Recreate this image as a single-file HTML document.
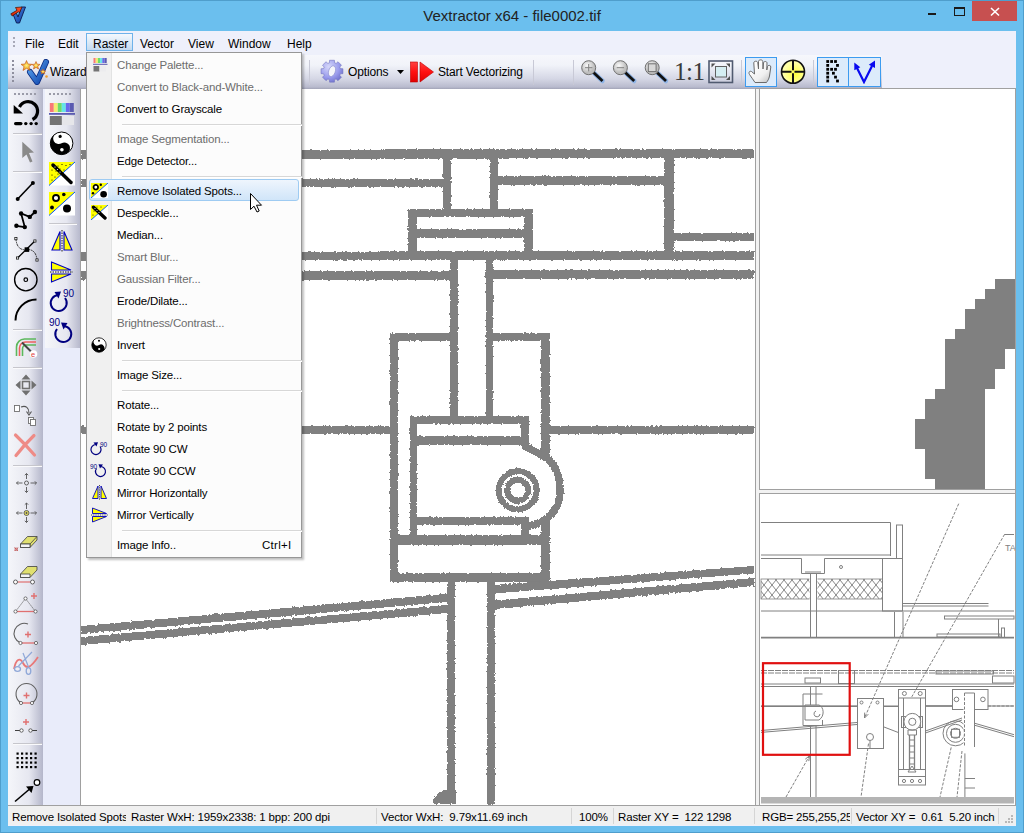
<!DOCTYPE html>
<html><head><meta charset="utf-8">
<style>
*{box-sizing:border-box}
html,body{margin:0;padding:0}
body{width:1024px;height:833px;overflow:hidden;position:relative;background:#6BBFEE;font-family:"Liberation Sans",sans-serif;font-size:12px;color:#000}
.a{position:absolute}
#title{left:0;top:0;width:1024px;height:31px;text-align:center;font-size:15px;color:#222;line-height:31px}
#client{left:8px;top:31px;width:1008px;height:795px;background:#EEF0FB}
#menubar{left:8px;top:31px;width:1008px;height:24px;background:#EEF0FB}
.ti{font-size:12px;color:#000;line-height:14px;letter-spacing:-0.15px}
.mi{position:absolute;top:37px;font-size:12px;color:#000}
#toolbar{left:8px;top:55px;width:874px;height:34px;border-radius:3px 3px 0 0;background:linear-gradient(#F6F7FC 0%,#F1F3F9 30%,#D5D7E5 70%,#B9BBCE 94%,#A2A4B7 100%)}
.sep1{left:13px;width:29px;height:2px;border-top:1px solid #C6C6CC;border-bottom:1px solid #FAFAFC}
.sep2{left:49px;width:28px;height:2px;border-top:1px solid #C6C6CC;border-bottom:1px solid #FAFAFC}
#col1{left:8px;top:89px;width:35px;height:716px;background:linear-gradient(90deg,#F5F6FA,#E6E7F0 60%,#B4B6CA)}
#col2{left:45px;top:89px;width:36px;height:259px;background:linear-gradient(90deg,#F5F6FA,#E6E7F0 60%,#B4B6CA)}
#canvas{left:80px;top:89px;width:675px;height:716px;background:#fff;border-left:1px solid #A0A0A0}
#rtop{left:755px;top:89px;width:261px;height:404px;background:#F2F2F2;border-left:1px solid #A0A0A0;border-right:1px solid #A0A0A0}
#rtopi{left:759px;top:89px;width:257px;height:401px;background:#fff;border-left:1px solid #A0A0A0;border-right:1px solid #A0A0A0;border-bottom:1px solid #A0A0A0}
#rbot{left:755px;top:493px;width:261px;height:313px;background:#F2F2F2;border-left:1px solid #A0A0A0;border-right:1px solid #A0A0A0}
#rboti{left:759px;top:493px;width:257px;height:313px;background:#fff;border:1px solid #A0A0A0;border-right-color:#A0A0A0}
#status{left:8px;top:805px;width:1008px;height:20px;background:#F0F0F0;border-top:1px solid #A0A0A0}
.st{top:808px;height:18px;line-height:18px;font-size:11.5px;letter-spacing:-0.15px;white-space:nowrap;color:#000}
.ssep{top:808px;width:1px;height:16px;background:#D5D5D5}
#menu{left:86px;top:52px;width:216px;height:506px;background:#FCFCFC;border:1px solid #979797;box-shadow:2px 2px 2px rgba(0,0,0,0.25)}
.mt{left:30px;height:22px;line-height:22px;font-size:11.5px;letter-spacing:-0.15px;white-space:nowrap}
</style></head><body>
<div id="title" class="a">Vextractor x64 - file0002.tif</div>
<div id="client" class="a"></div>

<div id="menubar" class="a">
</div>
<div class="a" style="left:13px;top:37px;width:2px;height:10px;background:repeating-linear-gradient(#A8A9B8 0 2px,transparent 2px 4px)"></div>
<div class="a" style="left:86px;top:33px;width:47px;height:18px;border:1px solid #6FB2EA;background:linear-gradient(#F4F8FD,#DDEAF7 50%,#C4DAF0)"></div>
<span class="mi" style="left:25px">File</span>
<span class="mi" style="left:58px">Edit</span>
<span class="mi" style="left:93px">Raster</span>
<span class="mi" style="left:140px">Vector</span>
<span class="mi" style="left:188px">View</span>
<span class="mi" style="left:228px">Window</span>
<span class="mi" style="left:287px">Help</span>


<div id="toolbar" class="a"></div>
<div class="a" style="left:12px;top:60px;width:2px;height:23px;background:repeating-linear-gradient(#8E8F9E 0 2px,transparent 2px 4px)"></div>
<svg class="a" style="left:20px;top:59px" width="30" height="26" viewBox="0 0 30 26">
 <defs><linearGradient id="vg" x1="0" y1="0" x2="1" y2="1"><stop offset="0" stop-color="#5AA6F0"/><stop offset="1" stop-color="#0B3FA8"/></linearGradient>
 <radialGradient id="sg"><stop offset="0" stop-color="#FFF27A"/><stop offset="1" stop-color="#E98A10"/></radialGradient></defs>
 <path d="M10 13 L17 23 L26 3" fill="none" stroke="#0A2A80" stroke-width="6" stroke-linecap="round" stroke-linejoin="round"/><path d="M10 13 L17 23 L26 3" fill="none" stroke="url(#vg)" stroke-width="4.4" stroke-linecap="round" stroke-linejoin="round"/>
 <path d="M6.5 1.5 L8 5 L12 5.3 L9 7.6 L10 11.5 L6.5 9.3 L3 11.5 L4 7.6 L1 5.3 L5 5 Z" fill="url(#sg)" stroke="#C2571A" stroke-width="0.6"/>
 <path d="M16 2.5 L17.2 5.2 L20 5.4 L17.8 7.2 L18.5 10 L16 8.4 L13.5 10 L14.2 7.2 L12 5.4 L14.8 5.2 Z" fill="url(#sg)" stroke="#C2571A" stroke-width="0.6"/>
 <path d="M23 10 L23.8 11.8 L25.8 12 L24.3 13.2 L24.8 15 L23 14 L21.2 15 L21.7 13.2 L20.2 12 L22.2 11.8 Z" fill="url(#sg)" stroke="#C2571A" stroke-width="0.5"/>
 <circle cx="26.5" cy="17.5" r="1.3" fill="#F0A030"/>
</svg>
<span class="a ti" style="left:50px;top:65px">Wizard</span>
<div class="a" style="left:309px;top:60px;width:1px;height:25px;background:#C8C9D6"></div>
<svg class="a" style="left:320px;top:59px" width="25" height="25" viewBox="0 0 25 25">
 <defs><radialGradient id="gg" cx="0.35" cy="0.3" r="0.8"><stop offset="0" stop-color="#D6D8FA"/><stop offset="0.6" stop-color="#9A9CEC"/><stop offset="1" stop-color="#6A6CC8"/></radialGradient></defs>
 <g transform="translate(12 12.2)">
 <path d="M8.41 -2.60 L10.93 -2.44 L10.93 2.44 L8.41 2.60 L7.78 4.11 L9.46 6.00 L6.00 9.46 L4.11 7.78 L2.60 8.41 L2.44 10.93 L-2.44 10.93 L-2.60 8.41 L-4.11 7.78 L-6.00 9.46 L-9.46 6.00 L-7.78 4.11 L-8.41 2.60 L-10.93 2.44 L-10.93 -2.44 L-8.41 -2.60 L-7.78 -4.11 L-9.46 -6.00 L-6.00 -9.46 L-4.11 -7.78 L-2.60 -8.41 L-2.44 -10.93 L2.44 -10.93 L2.60 -8.41 L4.11 -7.78 L6.00 -9.46 L9.46 -6.00 L7.78 -4.11 Z" fill="url(#gg)" stroke="#7476C0" stroke-width="0.6" stroke-linejoin="round"/>
 <ellipse cx="0" cy="0" rx="3.3" ry="5.6" transform="rotate(20)" fill="#F4F5FA" stroke="#8A8CD0" stroke-width="0.6"/>
 </g>
</svg>
<span class="a ti" style="left:348px;top:65px">Options</span>
<svg class="a" style="left:397px;top:70px" width="7" height="4"><path d="M0 0 H7 L3.5 4 Z" fill="#000"/></svg>
<svg class="a" style="left:410px;top:61px" width="25" height="22" viewBox="0 0 25 22">
 <defs><linearGradient id="rg" x1="0" y1="0" x2="0" y2="1"><stop offset="0" stop-color="#FF4040"/><stop offset="0.5" stop-color="#FF1010"/><stop offset="1" stop-color="#E00000"/></linearGradient></defs>
 <rect x="0.5" y="1" width="7" height="20" fill="url(#rg)" stroke="#C00000" stroke-width="0.6"/>
 <path d="M10 1 L23.5 11 L10 21 Z" fill="url(#rg)" stroke="#C00000" stroke-width="0.6"/>
</svg>
<span class="a ti" style="left:438px;top:65px">Start Vectorizing</span>
<div class="a" style="left:533px;top:60px;width:1px;height:25px;background:#C8C9D6"></div>
<div class="a" style="left:573px;top:60px;width:1px;height:25px;background:#C8C9D6"></div>
<svg class="a" style="left:578px;top:57px" width="160" height="30" viewBox="0 0 160 30">
 <defs><radialGradient id="lg" cx="0.4" cy="0.35"><stop offset="0" stop-color="#FAFAFA"/><stop offset="1" stop-color="#BDBDBD"/></radialGradient></defs>
 <g>
  <line x1="15" y1="15" x2="24.5" y2="24" stroke="#8FB4E6" stroke-width="4.5" stroke-linecap="round"/>
  <line x1="15" y1="15" x2="24.5" y2="24" stroke="#111" stroke-width="2.8" stroke-linecap="butt"/>
  <circle cx="10.7" cy="10.7" r="7" fill="url(#lg)" stroke="#707070" stroke-width="1"/>
  <path d="M7 10.7 H14.4 M10.7 7 V14.4" stroke="#808080" stroke-width="1"/>
 </g>
 <g transform="translate(31.7 0)">
  <line x1="15" y1="15" x2="24.5" y2="24" stroke="#8FB4E6" stroke-width="4.5" stroke-linecap="round"/>
  <line x1="15" y1="15" x2="24.5" y2="24" stroke="#111" stroke-width="2.8"/>
  <circle cx="10.7" cy="10.7" r="7" fill="url(#lg)" stroke="#707070" stroke-width="1"/>
  <path d="M7 10.7 H14.4" stroke="#808080" stroke-width="1"/>
 </g>
 <g transform="translate(63.5 0)">
  <line x1="15" y1="15" x2="24.5" y2="24" stroke="#8FB4E6" stroke-width="4.5" stroke-linecap="round"/>
  <line x1="15" y1="15" x2="24.5" y2="24" stroke="#111" stroke-width="2.8"/>
  <circle cx="10.7" cy="10.7" r="7" fill="url(#lg)" stroke="#707070" stroke-width="1"/>
  <rect x="6.8" y="6.8" width="7.8" height="7.8" fill="#D8D8D8" stroke="#707070" stroke-width="1"/>
 </g>
 <g transform="translate(130.5 3.5)">
  <rect x="0.5" y="0.5" width="23.5" height="21.5" fill="none" stroke="#505A70" stroke-width="1.6"/>
  <rect x="7" y="6" width="11" height="10.5" fill="#D5EEF2" stroke="#606060" stroke-width="1"/>
  <path d="M3 3 L7 3 L3 7 Z M21.5 3 L17.5 3 L21.5 7 Z M3 19.5 L7 19.5 L3 15.5 Z M21.5 19.5 L17.5 19.5 L21.5 15.5 Z" fill="#505050"/>
 </g>
</svg>
<span class="a" style="left:674px;top:57px;font-family:'Liberation Serif',serif;font-size:25px;color:#3A3A3A;line-height:30px;letter-spacing:-0.5px">1:1</span>
<div class="a" style="left:741px;top:60px;width:1px;height:25px;background:#C8C9D6"></div>
<div class="a" style="left:745px;top:57px;width:32px;height:30px;border:1px solid #3C9BF0;background:#DCEBFB"></div>
<svg class="a" style="left:748px;top:59px" width="25" height="25" viewBox="0 0 25 25">
 <defs><linearGradient id="hg" x1="0.2" y1="0.2" x2="0.9" y2="1"><stop offset="0" stop-color="#FFFFFF"/><stop offset="0.6" stop-color="#F0F0F0"/><stop offset="1" stop-color="#C4C4C4"/></linearGradient></defs>
 <path d="M7 23.5 C5.5 21 3.5 18.5 1.5 15.5 C0.5 14 1 11.5 3.5 12.5 L6.5 15 L5.8 4 C5.7 1.8 9.5 1.5 9.8 3.8 L10.5 10 L10.5 2.5 C10.5 0.3 14.8 0.3 14.8 2.5 L15 10 L15.5 4 C15.7 2 19 2 19 4 L18.8 11 L19.5 7.5 C19.8 5.8 23 6 22.8 8 L21.5 17 C21 20 19.5 22 18.5 23.5 Z" fill="url(#hg)" stroke="#6A6A6A" stroke-width="1"/>
</svg>
<svg class="a" style="left:780px;top:59px" width="27" height="26" viewBox="0 0 27 26">
 <defs><radialGradient id="yg" cx="0.6" cy="0.6"><stop offset="0" stop-color="#FFFF40"/><stop offset="1" stop-color="#FFFFA8"/></radialGradient></defs>
 <circle cx="13" cy="12.7" r="11.5" fill="url(#yg)" stroke="#111" stroke-width="1.6"/>
 <path d="M1.5 12.7 H11.5 M14.5 12.7 H24.5 M13 1.2 V11.2 M13 14.2 V24.2" stroke="#111" stroke-width="2"/>
</svg>
<div class="a" style="left:813px;top:60px;width:1px;height:25px;background:#C8C9D6"></div>
<div class="a" style="left:817px;top:57px;width:32px;height:30px;border:1px solid #3C9BF0;background:#DCEBFB"></div>
<div class="a" style="left:848px;top:57px;width:33px;height:30px;border:1px solid #3C9BF0;background:#DCEBFB"></div>
<svg class="a" style="left:825px;top:60px" width="16" height="24" viewBox="0 0 16 24"><g fill="#000"><rect x="1.30" y="0.10" width="2.8" height="2.8"/><rect x="5.20" y="0.10" width="2.8" height="2.8"/><rect x="9.10" y="0.10" width="2.8" height="2.8"/><rect x="1.30" y="4.00" width="2.8" height="2.8"/><rect x="11.10" y="4.00" width="2.8" height="2.8"/><rect x="1.30" y="7.90" width="2.8" height="2.8"/><rect x="5.20" y="7.90" width="2.8" height="2.8"/><rect x="9.10" y="7.90" width="2.8" height="2.8"/><rect x="1.30" y="11.80" width="2.8" height="2.8"/><rect x="7.00" y="11.80" width="2.8" height="2.8"/><rect x="1.30" y="15.70" width="2.8" height="2.8"/><rect x="9.10" y="15.70" width="2.8" height="2.8"/><rect x="1.30" y="19.60" width="2.8" height="2.8"/><rect x="11.10" y="19.60" width="2.8" height="2.8"/></g></svg>
<svg class="a" style="left:852px;top:60px" width="25" height="24" viewBox="0 0 25 24">
 <path d="M5 8 L12 22 L20 6" fill="none" stroke="#0A0AF0" stroke-width="2.2"/>
 <path d="M2.3 2.5 L8.3 7.2 L2.3 10.2 Z M23 0.5 L23 8 L16.8 4.8 Z" fill="#0A0AF0"/>
</svg>


<div class="a" style="left:43px;top:89px;width:38px;height:716px;background:#E9ECFA"></div>
<div id="col1" class="a"></div>
<div id="col2" class="a"></div>
<div class="a" style="left:14px;top:93px;width:24px;height:2px;background:repeating-linear-gradient(90deg,#9A9BA8 0 2px,transparent 2px 4px)"></div>
<div class="a" style="left:49px;top:93px;width:24px;height:2px;background:repeating-linear-gradient(90deg,#9A9BA8 0 2px,transparent 2px 4px)"></div>
<div class="a sep1" style="top:133px"></div>
<div class="a sep1" style="top:171px"></div>
<div class="a sep1" style="top:329px"></div>
<div class="a sep1" style="top:367px"></div>
<div class="a sep1" style="top:465px"></div>
<div class="a sep1" style="top:743px"></div>
<div class="a sep2" style="top:223px"></div>
<svg class="a" style="left:8px;top:89px" width="36" height="716" viewBox="0 0 36 716">
 <!-- undo -->
 <path d="M11.5 18 A 9.5 9.5 0 1 1 24.5 30.5" fill="none" stroke="#000" stroke-width="3.2"/>
 <path d="M5.7 16 L15 24.5 L5.7 24.5 Z" fill="#000"/>
 <rect x="6" y="33" width="8.5" height="3.2" rx="1.6" fill="#000"/>
 <circle cx="17.8" cy="34.6" r="1.7" fill="#000"/><circle cx="23.1" cy="34.6" r="1.7" fill="#000"/><circle cx="28.2" cy="34.6" r="1.7" fill="#000"/>
 <!-- arrow cursor -->
 <path d="M14.3 52.8 L26 63.5 L21 64 L24.5 72.5 L22 73.5 L18.5 65.5 L14.3 69 Z" fill="#8A8A8A"/>
 <!-- line -->
 <line x1="9.7" y1="110" x2="24.9" y2="94" stroke="#000" stroke-width="1.6"/>
 <circle cx="9.7" cy="110" r="2" fill="#000"/><circle cx="24.9" cy="94" r="2" fill="#000"/>
 <!-- polyline -->
 <path d="M8.4 136.8 L16.8 138.1 L13.1 124.5 L21.8 127.9 L26.9 123" fill="none" stroke="#000" stroke-width="1.8"/>
 <circle cx="8.4" cy="136.8" r="2.2"/><circle cx="16.8" cy="138.1" r="2.2"/><circle cx="13.1" cy="124.5" r="2.2"/><circle cx="21.8" cy="127.9" r="2.2"/><circle cx="26.9" cy="123" r="2.2"/>
 <!-- bezier -->
 <path d="M7.9 149.8 Q 9 162 18.8 160.6 Q 28 160 29 171" fill="none" stroke="#202020" stroke-width="0.9" stroke-dasharray="2 0.7"/>
 <line x1="9.6" y1="169" x2="26.9" y2="152" stroke="#000" stroke-width="1.3"/>
 <rect x="16.6" y="158.3" width="4.6" height="4.6" fill="#000"/>
 <rect x="6.8" y="148.6" width="2.2" height="2.2" fill="#fff" stroke="#000" stroke-width="0.7"/>
 <rect x="25.8" y="150.9" width="2.2" height="2.2" fill="#fff" stroke="#000" stroke-width="0.7"/>
 <rect x="8.5" y="167.9" width="2.2" height="2.2" fill="#fff" stroke="#000" stroke-width="0.7"/>
 <rect x="27.9" y="169.9" width="2.2" height="2.2" fill="#fff" stroke="#000" stroke-width="0.7"/>
 <!-- circle -->
 <circle cx="17.8" cy="190.7" r="11.2" fill="none" stroke="#000" stroke-width="1.4"/>
 <circle cx="17.8" cy="190.7" r="1.8" fill="none" stroke="#000" stroke-width="1.2"/>
 <!-- arc -->
 <path d="M7.5 231.5 A 21 21 0 0 1 28.5 210.5" fill="none" stroke="#000" stroke-width="2"/>
 <!-- colour lines -->
 <path d="M8.5 267 V258 A 8 8 0 0 1 16.5 250 H28" fill="none" stroke="#5CB85C" stroke-width="1.6"/>
 <path d="M11.5 267 V259 A 6 6 0 0 1 17.5 253 H28" fill="none" stroke="#F06060" stroke-width="1.6"/>
 <path d="M14.5 267 V260 A 4 4 0 0 1 18.5 256 H28" fill="none" stroke="#5CB85C" stroke-width="1.6"/>
 <line x1="14" y1="253.5" x2="23.5" y2="263" stroke="#444" stroke-width="2"/>
 <circle cx="25.5" cy="265" r="3.8" fill="#fff"/>
 <text x="23" y="268" font-size="7.5" fill="#E04040" font-family="Liberation Sans">e</text>
 <!-- move -->
 <path d="M18 285.5 L22.5 290.5 L13.5 290.5 Z M18 306.5 L22.5 301.5 L13.5 301.5 Z M7.5 296 L12.5 291.5 L12.5 300.5 Z M28.5 296 L23.5 291.5 L23.5 300.5 Z" fill="#707070"/>
 <rect x="14.5" y="292.5" width="7" height="7" fill="none" stroke="#707070" stroke-width="1.6"/>
 <!-- copy transform -->
 <rect x="6.5" y="316.5" width="5" height="6" fill="#fff" stroke="#707070" stroke-width="0.9"/>
 <path d="M13 318 C18 316 21 319 21 324" fill="none" stroke="#555" stroke-width="1.1"/>
 <path d="M18.5 322.5 L21 326 L23.5 322.5" fill="none" stroke="#555" stroke-width="1.1"/>
 <rect x="20.5" y="328.5" width="5" height="6" fill="#fff" stroke="#707070" stroke-width="0.9"/>
 <rect x="22.5" y="330.5" width="5" height="6" fill="#fff" stroke="#707070" stroke-width="0.9"/>
 <!-- red X -->
 <path d="M7.5 346 Q17 355 26.5 366 M26 346.5 Q16 356 8 366.5" fill="none" stroke="#EE8B86" stroke-width="3.2" stroke-linecap="round"/>
 <!-- move node -->
 <g stroke="#555" stroke-width="0.9" fill="none">
 <circle cx="18.5" cy="394" r="2"/>
 <path d="M18.5 384.5 V390 M16.8 386.2 L18.5 384.5 L20.2 386.2 M18.5 398 V403.5 M16.8 401.8 L18.5 403.5 L20.2 401.8 M8.5 394 H14.5 M10.2 392.3 L8.5 394 L10.2 395.7 M22.5 394 H28.5 M26.8 392.3 L28.5 394 L26.8 395.7"/>
 </g>
 <g stroke="#555" stroke-width="0.9" fill="none">
 <circle cx="18.5" cy="424" r="2.5" fill="#F0E860"/>
 <path d="M17.3 424 H19.7 M18.5 422.8 V425.2" />
 <path d="M18.5 414 V420 M16.8 415.7 L18.5 414 L20.2 415.7 M18.5 428 V433.5 M16.8 431.8 L18.5 433.5 L20.2 431.8 M8.5 424 H14.5 M10.2 422.3 L8.5 424 L10.2 425.7 M22.5 424 H28.5 M26.8 422.3 L28.5 424 L26.8 425.7"/>
 </g>
 <!-- eraser 1 -->
 <path d="M12.5 455 L19.5 447.5 L29 447.5 L29 451 L22 458.5 L12.5 458.5 Z" fill="#E0E070" stroke="#404040" stroke-width="0.8"/>
 <path d="M12.5 455 L22 455 L29 447.5 M22 455 V458.5" fill="none" stroke="#404040" stroke-width="0.8"/>
 <path d="M12.5 455 H22 V458.5 H12.5 Z" fill="#F4F4F4" stroke="#404040" stroke-width="0.8"/>
 <path d="M6.5 458.5 L10 462 M10 458.5 L6.5 462" stroke="#E07070" stroke-width="1"/>
 <rect x="7" y="459" width="2.5" height="2.5" fill="none" stroke="#A04040" stroke-width="0.5"/>
 <!-- eraser 2 -->
 <path d="M12.5 485 L19.5 477.5 L29 477.5 L29 481 L22 488.5 L12.5 488.5 Z" fill="#E0E070" stroke="#404040" stroke-width="0.8"/>
 <path d="M12.5 485 H22 V488.5 H12.5 Z" fill="#F4F4F4" stroke="#404040" stroke-width="0.8"/>
 <line x1="9.5" y1="493" x2="22.5" y2="493" stroke="#E07070" stroke-width="1.2"/>
 <circle cx="7.5" cy="493" r="2" fill="#fff" stroke="#404040" stroke-width="0.8"/>
 <circle cx="24.5" cy="493" r="2" fill="#fff" stroke="#404040" stroke-width="0.8"/>
 <!-- triangle + -->
 <path d="M7.5 522.5 L17.5 509.5 L27.5 522.5" fill="none" stroke="#606060" stroke-width="0.9" stroke-dasharray="1.5 1"/>
 <line x1="9" y1="522.5" x2="26" y2="522.5" stroke="#E07070" stroke-width="1.3"/>
 <circle cx="7.5" cy="522.5" r="1.6" fill="#fff" stroke="#404040" stroke-width="0.7"/>
 <circle cx="27.5" cy="522.5" r="1.6" fill="#fff" stroke="#404040" stroke-width="0.7"/>
 <circle cx="17.5" cy="509.5" r="1.6" fill="#fff" stroke="#404040" stroke-width="0.7"/>
 <path d="M23 507 H29 M26 504 V510" stroke="#E07070" stroke-width="1.4"/>
 <!-- arc + -->
 <path d="M12.5 554 A 8.5 8.5 0 0 1 20 535" fill="none" stroke="#606060" stroke-width="1.1"/>
 <line x1="12.5" y1="554" x2="28" y2="554" stroke="#E07070" stroke-width="1.3"/>
 <circle cx="12.5" cy="554" r="1.6" fill="#fff" stroke="#404040" stroke-width="0.7"/>
 <circle cx="28" cy="554" r="1.6" fill="#fff" stroke="#404040" stroke-width="0.7"/>
 <path d="M17 545.5 H23 M20 542.5 V548.5" stroke="#E07070" stroke-width="1.4"/>
 <!-- scissors -->
 <path d="M6 580 C8 570 12 568 15 574 C18 580 22 580 30 568" fill="none" stroke="#E87878" stroke-width="1.8"/>
 <path d="M10.5 577 L24 563 M15 564 L20.5 578" stroke="#90A8D8" stroke-width="1.2"/>
 <ellipse cx="9.5" cy="580" rx="3" ry="2.3" fill="none" stroke="#90A8D8" stroke-width="1.3"/>
 <ellipse cx="20.5" cy="582" rx="2.3" ry="3.3" fill="none" stroke="#90A8D8" stroke-width="1.3"/>
 <!-- circle + -->
 <path d="M13 614 A 10.5 10.5 0 1 1 24 614" fill="none" stroke="#606060" stroke-width="1.1"/>
 <line x1="13" y1="614" x2="24" y2="614" stroke="#E07070" stroke-width="1.3"/>
 <circle cx="13" cy="614" r="1.6" fill="#fff" stroke="#404040" stroke-width="0.7"/>
 <circle cx="24" cy="614" r="1.6" fill="#fff" stroke="#404040" stroke-width="0.7"/>
 <path d="M15.5 606.5 H21.5 M18.5 603.5 V609.5" stroke="#E07070" stroke-width="1.4"/>
 <!-- dots + -->
 <line x1="7" y1="641.5" x2="14" y2="641.5" stroke="#404040" stroke-width="1"/>
 <line x1="22" y1="641.5" x2="29" y2="641.5" stroke="#404040" stroke-width="1"/>
 <circle cx="13.5" cy="641.5" r="1.7" fill="#fff" stroke="#404040" stroke-width="0.8"/>
 <circle cx="22.5" cy="641.5" r="1.7" fill="#fff" stroke="#404040" stroke-width="0.8"/>
 <path d="M15 633 H21 M18 630 V636" stroke="#E07070" stroke-width="1.4"/>
 <!-- grid -->
 <g fill="#000">
 <rect x="8.5" y="663.5" width="2.2" height="2.2"/><rect x="13" y="663.5" width="2.2" height="2.2"/><rect x="17.5" y="663.5" width="2.2" height="2.2"/><rect x="22" y="663.5" width="2.2" height="2.2"/><rect x="26.5" y="663.5" width="2.2" height="2.2"/>
 <rect x="8.5" y="668" width="2.2" height="2.2"/><rect x="13" y="668" width="2.2" height="2.2"/><rect x="17.5" y="668" width="2.2" height="2.2"/><rect x="22" y="668" width="2.2" height="2.2"/><rect x="26.5" y="668" width="2.2" height="2.2"/>
 <rect x="8.5" y="672.5" width="2.2" height="2.2"/><rect x="13" y="672.5" width="2.2" height="2.2"/><rect x="17.5" y="672.5" width="2.2" height="2.2"/><rect x="22" y="672.5" width="2.2" height="2.2"/><rect x="26.5" y="672.5" width="2.2" height="2.2"/>
 <rect x="8.5" y="677" width="2.2" height="2.2"/><rect x="13" y="677" width="2.2" height="2.2"/><rect x="17.5" y="677" width="2.2" height="2.2"/><rect x="22" y="677" width="2.2" height="2.2"/><rect x="26.5" y="677" width="2.2" height="2.2"/>
 </g>
 <!-- pointer arrow -->
 <line x1="7" y1="712.5" x2="24" y2="698" stroke="#000" stroke-width="1.6"/>
 <path d="M25.5 697 L18 697.5 L23.5 704 Z" fill="#000"/>
 <circle cx="29" cy="693.5" r="2.8" fill="#fff" stroke="#000" stroke-width="1.2"/>
</svg>
<svg class="a" style="left:45px;top:89px" width="36" height="260" viewBox="0 0 36 260">
 <!-- palette -->
 <rect x="4.8" y="14" width="4" height="9" fill="#F87878"/><rect x="8.8" y="14" width="4" height="9" fill="#F4EC70"/><rect x="12.8" y="14" width="4" height="9" fill="#6CDC6C"/><rect x="16.8" y="14" width="4" height="9" fill="#64E4E8"/><rect x="20.8" y="14" width="4" height="9" fill="#6868EC"/><rect x="24.8" y="14" width="4" height="9" fill="#5A5AB0"/>
 <rect x="4" y="24" width="26" height="1.8" fill="#5A5AB0"/>
 <rect x="4.8" y="27" width="12" height="9" fill="#747474"/><rect x="17" y="27" width="12" height="9" fill="#E6E6EA"/>
 <!-- yin yang -->
 <g transform="translate(16.6 54.3)">
 <circle r="11.3" fill="#fff" stroke="#000" stroke-width="1"/>
 <path d="M0 -11.3 A 11.3 11.3 0 0 0 0 11.3 A 5.65 5.65 0 0 0 0 0 A 5.65 5.65 0 0 1 0 -11.3 Z" fill="#000" transform="rotate(-30)"/>
 <circle cx="-0.3" cy="-7" r="1.6" fill="#000" transform="rotate(-10)"/>
 <circle cx="0.3" cy="6.5" r="1.8" fill="#fff"/>
 </g>
 <!-- despeckle -->
 <g transform="translate(4 73)">
 <rect x="0" y="0" width="26" height="23.5" fill="#fff"/>
 <path d="M0 0 H26 L0 23.5 Z" fill="#FFFF00"/>
 <g fill="#000"><circle cx="5" cy="3" r="0.6"/><circle cx="9" cy="4" r="0.6"/><circle cx="13" cy="2.5" r="0.6"/><circle cx="17" cy="3.5" r="0.6"/><circle cx="21" cy="2.5" r="0.6"/><circle cx="3" cy="8" r="0.6"/><circle cx="7" cy="9" r="0.6"/><circle cx="11" cy="7" r="0.6"/><circle cx="15" cy="8" r="0.6"/><circle cx="3" cy="13" r="0.6"/><circle cx="6" cy="15" r="0.6"/><circle cx="9" cy="12" r="0.6"/><circle cx="3" cy="18" r="0.6"/></g>
 <line x1="0" y1="23.5" x2="26" y2="0" stroke="#0050FF" stroke-width="1"/>
 <line x1="4" y1="3" x2="22" y2="20.5" stroke="#000" stroke-width="3.5" stroke-linecap="round"/>
 <g fill="#fff"><circle cx="6" cy="5" r="0.6"/><circle cx="8.5" cy="7.5" r="0.6"/><circle cx="11" cy="10" r="0.6"/></g>
 </g>
 <!-- remove spots -->
 <g transform="translate(4 103)">
 <rect x="0" y="0" width="26" height="23.5" fill="#fff"/>
 <path d="M0 0 H26 L0 23.5 Z" fill="#FFFF00"/>
 <line x1="0" y1="23.5" x2="26" y2="0" stroke="#0050FF" stroke-width="1"/>
 <circle cx="7" cy="6" r="3" fill="#fff" stroke="#000" stroke-width="1.8"/>
 <circle cx="14.8" cy="2.5" r="1.8" fill="#000"/>
 <circle cx="3" cy="15.5" r="1.9" fill="#000"/>
 <circle cx="18" cy="16.5" r="4" fill="#000"/>
 </g>
 <!-- mirror h -->
 <g transform="translate(6 141)">
 <path d="M9 1.5 L9 20 L1 20 Z M13 1.5 L13 20 L21 20 Z" fill="#FFFF00" stroke="#0000C0" stroke-width="1.1"/>
 <line x1="11" y1="0" x2="11" y2="21.5" stroke="#000" stroke-width="0.9" stroke-dasharray="1.5 1"/>
 </g>
 <!-- mirror v -->
 <g transform="translate(5 172)">
 <path d="M1.5 1 L21 9 L1.5 9 Z M1.5 13 L21 13 L1.5 21 Z" fill="#FFFF00" stroke="#0000C0" stroke-width="1.1"/>
 <line x1="0" y1="11" x2="23" y2="11" stroke="#000" stroke-width="0.9" stroke-dasharray="1.5 1"/>
 </g>
 <!-- rotate cw -->
 <g transform="translate(3 200)">
 <path d="M10 6 A 8 8 0 1 0 17 9" fill="none" stroke="#000080" stroke-width="2"/>
 <path d="M6.5 3 L13 2.5 L10.5 9.5 Z" fill="#000080"/>
 <text x="15" y="8" font-size="10" fill="#000080" font-family="Liberation Sans">90</text>
 </g>
 <!-- rotate ccw -->
 <g transform="translate(3 229)">
 <path d="M16 8 A 8 8 0 1 1 9 11" fill="none" stroke="#000080" stroke-width="2"/>
 <path d="M19.5 5 L13 4.5 L15.5 11.5 Z" fill="#000080"/>
 <text x="1" y="8" font-size="10" fill="#000080" font-family="Liberation Sans">90</text>
 </g>
</svg>


<div id="canvas" class="a"></div>
<svg class="a" style="left:81px;top:89px" width="674" height="716" viewBox="81 89 674 716">
<defs><filter id="rough" x="-2%" y="-2%" width="104%" height="104%" filterUnits="objectBoundingBox">
 <feTurbulence type="fractalNoise" baseFrequency="0.45" numOctaves="2" seed="7" result="t"/>
 <feDisplacementMap in="SourceGraphic" in2="t" scale="3" xChannelSelector="R" yChannelSelector="G" result="d"/>
 <feComponentTransfer in="d"><feFuncA type="discrete" tableValues="0 1"/></feComponentTransfer>
</filter></defs>
<g filter="url(#rough)">
<g fill="#808080">
 <polygon points="81,150 754,149 754,158 81,159.3"/>
 <rect x="81" y="179" width="370" height="8"/>
 <polygon points="490,176 673,176 673,185 490,184.5"/>
 <rect x="443" y="151" width="7.5" height="59"/>
 <rect x="490" y="151" width="8" height="59"/>
 <rect x="664" y="149" width="9.5" height="103"/>
 <rect x="673" y="233" width="81" height="8.3"/>
 <rect x="408.5" y="209" width="124.5" height="8"/>
 <rect x="408.5" y="229" width="124.5" height="9"/>
 <rect x="408.5" y="209" width="8" height="44"/>
 <rect x="524.5" y="209" width="8.5" height="44"/>
 <polygon points="81,252 754,250.7 754,260 81,260.7"/>
 <rect x="81" y="271" width="376" height="9"/>
 <rect x="485" y="270" width="269" height="9"/>
 <rect x="450.5" y="257" width="7.3" height="160"/>
 <rect x="486" y="257" width="7.3" height="160"/>
 <rect x="390" y="333" width="7.5" height="248.5"/>
 <rect x="390" y="333" width="60.6" height="8"/>
 <rect x="493" y="333" width="56" height="8"/>
 <rect x="541.5" y="333" width="8" height="125"/>
 <rect x="541.5" y="520" width="8" height="63"/>
 <rect x="390" y="573.5" width="160" height="8"/>
 <rect x="81" y="426" width="309" height="8.3"/>
 <rect x="549" y="426" width="205" height="8.3"/>
 <rect x="410" y="416" width="119" height="8"/>
 <rect x="410" y="436" width="119" height="8.6"/>
 <rect x="410" y="416" width="7.3" height="126"/>
 <rect x="521" y="416" width="8" height="28.6"/>
 <rect x="410" y="517" width="119" height="8"/>
 <rect x="521" y="517" width="8" height="19"/>
 <rect x="390" y="535.5" width="159" height="9"/>
 <rect x="447.5" y="581" width="7.5" height="223"/>
 <rect x="486.7" y="581" width="8" height="223"/>
 <path d="M433 804 A 14 14 0 0 1 447.5 790 L 456 790 L 456 804 Z"/>
 <polygon points="81,626 447,593.8 447,602 81,634"/>
 <polygon points="81,637 447,605 447,613 81,645"/>
 <polygon points="494,585 754,566 754,573.5 494,593.5"/>
 <polygon points="494,600.5 754,578 754,586 494,609"/>
</g>
<path d="M523 445 L 543 456 C 555 462 560 476 560 490 C 560 505 553 516 541 522 L 527 527" fill="none" stroke="#808080" stroke-width="7.5"/>
<circle cx="517.7" cy="490.2" r="19" fill="none" stroke="#808080" stroke-width="6"/>
<circle cx="517.7" cy="490.2" r="10.4" fill="none" stroke="#808080" stroke-width="6"/>
</g></svg>


<div class="a" style="left:755px;top:88px;width:261px;height:1px;background:#A0A0A0"></div><div id="rtop" class="a"></div><div id="rtopi" class="a"></div>
<svg class="a" style="left:760px;top:89px" width="255" height="400" viewBox="760 89 255 400">
 <path fill="#808080" d="M995 279 H1015 V349 H1005 V369 H995 V389 H985 V489 H935 V479 H925 V449 H915 V419 H925 V399 H935 V389 H945 V339 H955 V329 H965 V309 H975 V299 H985 V289 H995 Z"/>
</svg>


<div id="rbot" class="a"></div><div id="rboti" class="a"></div>
<svg class="a" style="left:760px;top:494px" width="255" height="311" viewBox="760 494 255 311">
<defs>
 <pattern id="hatch" width="8" height="10" patternUnits="userSpaceOnUse">
  <path d="M0 0 L8 10 M8 0 L0 10" stroke="#787878" stroke-width="0.9"/>
 </pattern>
</defs>
<g fill="none" stroke="#808080" stroke-width="1">
 <path d="M761 522.5 H890.5 V556"/>
 <path d="M761 555 H890.5"/>
 <path d="M761 558.5 H801.5 V573.5 H824.5 V558.5 H902.5"/>
 <path d="M805 572 H821"/>
 <rect x="896.5" y="525" width="6" height="33.5"/>
 <rect x="882.5" y="558.5" width="20" height="52.5"/>
 <circle cx="841" cy="567" r="1.5"/>
 <path d="M761 611 H1014"/>
 <path d="M810.5 573.5 V637.5 M816.5 573.5 V637.5"/>
 <path d="M902.5 603.5 H988.5 M902.5 606 H988.5"/>
 <rect x="944.5" y="616" width="69.5" height="3"/>
 <path d="M998.5 619 V637.5"/>
 <rect x="1001.5" y="628" width="3" height="9.5"/>
 <rect x="937" y="634" width="63" height="3"/>
 <path d="M894.5 612 V637.5 M903 612 V637.5"/>
 <path d="M1004.5 534.5 H1014"/>
</g>
<rect x="761" y="579" width="121.5" height="20" fill="url(#hatch)"/>
<rect x="761" y="579" width="121.5" height="20" fill="none" stroke="#808080" stroke-width="0.8"/>
<rect x="809.5" y="578" width="8" height="22" fill="#fff"/>
<path d="M810.5 573.5 V637.5 M816.5 573.5 V637.5" stroke="#808080" stroke-width="1"/>
<path d="M761 637.7 H1014" stroke="#808080" stroke-width="1.8"/>
<g fill="none" stroke="#808080" stroke-width="1" stroke-dasharray="3 1.5">
 <path d="M958.7 503.7 L 864.5 718"/>
 <path d="M1004.6 534.3 L 911.8 696.8"/>
</g>
<text x="1005" y="550.5" font-size="9" fill="#808080" font-family="Liberation Sans">TA</text>
<!-- lower part -->
<g fill="none" stroke="#808080" stroke-width="1">
 <path d="M761 670.5 H1014 M761 673 H1014" stroke-dasharray="6 1"/>
 <path d="M761 684 H1014 M761 686.5 H1014"/>
 <rect x="838.5" y="670.5" width="16" height="13"/>
 <rect x="805" y="678" width="15.5" height="5"/>
 <path d="M810.5 686.5 V705 M816 686.5 V705 M810.5 726 V797 M816 726 V797"/>
 <path d="M822.5 694 H803 V725.5 H822.5 V720"/>
 <path d="M805 720 V705 H819 C824 707 825 716 819 720 H805"/>
 <path d="M816 711 A 3 3 0 1 0 820 714"/>
 <path d="M761 706.2 H857 M925.5 706 H952 M987.7 706 H1014"/>
 <path d="M761 732.4 L857 724.5 M761 730.5 L857 722.5"/>
 <rect x="857.5" y="698.5" width="26" height="50"/>
 <circle cx="861.5" cy="702.5" r="1.5"/><circle cx="877.5" cy="702.5" r="1.5"/>
 <circle cx="870" cy="737" r="3.5"/>
 <path d="M870 740.5 V748"/>
 <rect x="898.5" y="689.5" width="27" height="95.5"/>
 <path d="M898.5 698 H925.5 M903.5 698 V769 M920.5 698 V769 M898.5 769.5 H925.5 M898.5 776.5 H925.5"/>
 <circle cx="904.4" cy="693.5" r="2"/><circle cx="920.2" cy="693.5" r="2"/>
 <rect x="901.5" y="716.5" width="21" height="11"/>
 <circle cx="912.3" cy="721.8" r="8.4" fill="#fff"/>
 <circle cx="912.3" cy="721.8" r="3.6"/>
 <path d="M908 730 H916.5 V735 H908 Z"/>
 <path d="M909.5 735 V769 M914.5 735 V769" stroke-width="1.3"/>
 <path d="M909.5 740 H914.5 M909.5 746 H914.5 M909.5 752 H914.5 M909.5 758 H914.5 M909.5 764 H914.5"/>
 <path d="M908 772 L912 766 L916 772 Z"/>
 <circle cx="904" cy="781" r="1.6"/><circle cx="912" cy="781" r="1.6"/><circle cx="920" cy="781" r="1.6"/>
 <rect x="952.5" y="689.5" width="35.5" height="20"/>
 <circle cx="956.5" cy="699.4" r="2.3"/><circle cx="982.9" cy="699.4" r="2.3"/>
 <path d="M883.5 726.8 L898 732.4 M925.5 731 L962 718 M925.5 733 L962 720 M974.5 723.2 L1014 734.7 M974.5 725.2 L1014 736.7"/>
 <path d="M761 706.2 H857 M883.5 706.2 H898.5 M925.5 706 H952.5" stroke-width="1.4"/>
 <path d="M988 706 H1014" stroke-dasharray="3 1.5"/>
 <circle cx="955.5" cy="733.3" r="12.5"/>
 <circle cx="955.5" cy="733.3" r="9"/>
 <circle cx="955.5" cy="733.3" r="5"/>
 <rect x="951.5" y="729.3" width="8" height="8"/>
 <rect x="963.5" y="692.5" width="11" height="56" fill="#fff" stroke="none"/>
 <path d="M964.5 693 H974.5 M974.5 693 V747" />
 <path d="M964.5 693 V747" stroke-dasharray="3 1.5"/>
 <path d="M964.9 753.4 V797 M964.9 778.5 H975 M964.9 788 H975"/>
 <rect x="936" y="671" width="57.5" height="3"/>
 <rect x="992.5" y="676" width="21.5" height="7"/>
</g>
<g fill="none" stroke="#808080" stroke-width="1" stroke-dasharray="3 1.5">
 <path d="M868.5 743.6 L861 797"/>
 <path d="M786 797 L809.5 755.8"/>
 <path d="M951.2 747.4 L940 797"/>
 <path d="M962 751 L957 797"/>
</g>
<path d="M868.3 714.2 L864.5 718 L864.7 712.6 M808.8 761.1 L809.5 755.8 L805.3 759.1" fill="none" stroke="#808080" stroke-width="1"/>
<rect x="763" y="663.2" width="86.7" height="91.6" fill="none" stroke="#E01010" stroke-width="2.2"/>
<rect x="761" y="797" width="253" height="6.5" fill="#B4B4B4"/>
</svg>


<div id="status" class="a"></div>
<div class="a st" style="left:12px;width:114px;overflow:hidden">Remove Isolated Spots...</div>
<div class="a st" style="left:131px">Raster WxH: 1959x2338: 1 bpp: 200 dpi</div>
<div class="a ssep" style="left:376px"></div>
<div class="a st" style="left:381px">Vector WxH:&nbsp; 9.79x11.69 inch</div>
<div class="a ssep" style="left:571px"></div>
<div class="a st" style="left:579px">100%</div>
<div class="a ssep" style="left:613px"></div>
<div class="a st" style="left:618px">Raster XY = &nbsp;122 1298</div>
<div class="a ssep" style="left:754px"></div>
<div class="a st" style="left:762px;width:88px;overflow:hidden">RGB= 255,255,25</div>
<div class="a ssep" style="left:851px"></div>
<div class="a st" style="left:856px">Vector XY = &nbsp;0.61 &nbsp;5.20 inch</div>
<div class="a ssep" style="left:998px"></div>
<svg class="a" style="left:1005px;top:815px" width="9" height="9"><g fill="#B8B8B8"><rect x="6" y="0" width="2" height="2"/><rect x="3" y="3" width="2" height="2"/><rect x="6" y="3" width="2" height="2"/><rect x="0" y="6" width="2" height="2"/><rect x="3" y="6" width="2" height="2"/><rect x="6" y="6" width="2" height="2"/></g></svg>

<div id="menu" class="a">
<div class="a" style="left:0;top:0;width:25px;height:504px;background:#F0F0F0;border-right:1px solid #E2E3E3"></div>
<div class="a mt" style="top:1px;color:#6D6D6D">Change Palette...</div>
<div class="a" style="left:5px;top:4px;line-height:0"><svg width="16" height="16" viewBox="0 0 16 16"><rect x="1.5" y="1" width="2.2" height="5" fill="#F87878"/><rect x="3.7" y="1" width="2.2" height="5" fill="#F4EC70"/><rect x="5.9" y="1" width="2.2" height="5" fill="#6CDC6C"/><rect x="8.1" y="1" width="2.2" height="5" fill="#64E4E8"/><rect x="10.3" y="1" width="2.2" height="5" fill="#6868EC"/><rect x="12.5" y="1" width="2.2" height="5" fill="#5A5AB0"/><rect x="1" y="6.8" width="14.5" height="1" fill="#5A5AB0"/><rect x="1.5" y="9" width="6" height="5.5" fill="#747474"/><rect x="7.5" y="9" width="6.5" height="5.5" fill="#ECECEE"/></svg></div>
<div class="a mt" style="top:23px;color:#6D6D6D">Convert to Black-and-White...</div>
<div class="a mt" style="top:45px;color:#000">Convert to Grayscale</div>
<div class="a" style="left:35px;top:71px;width:180px;height:1px;background:#D7D7D7;box-shadow:0 1px 0 #fff"></div>
<div class="a mt" style="top:75px;color:#6D6D6D">Image Segmentation...</div>
<div class="a mt" style="top:97px;color:#000">Edge Detector...</div>
<div class="a" style="left:35px;top:123px;width:180px;height:1px;background:#D7D7D7;box-shadow:0 1px 0 #fff"></div>
<div class="a" style="left:2px;top:126px;width:210px;height:22px;border:1px solid #9ECBF2;border-radius:3px;background:linear-gradient(#EEF5FD,#D0E5F9)"></div>
<div class="a mt" style="top:127px;color:#000">Remove Isolated Spots...</div>
<div class="a" style="left:4px;top:130px;line-height:0"><svg width="17" height="15" viewBox="0 0 17 15"><rect width="17" height="15" fill="#fff"/><path d="M0 0 H17 L0 15 Z" fill="#FFFF00"/><line x1="0" y1="15" x2="17" y2="0" stroke="#0050FF" stroke-width="0.9"/><circle cx="4.8" cy="4.2" r="2.3" fill="#fff" stroke="#000" stroke-width="1.7"/><circle cx="9.8" cy="1.8" r="1.2" fill="#000"/><circle cx="2" cy="10.2" r="1.2" fill="#000"/><circle cx="12.6" cy="11.2" r="3.3" fill="#000"/></svg></div>
<div class="a mt" style="top:149px;color:#000">Despeckle...</div>
<div class="a" style="left:4px;top:152px;line-height:0"><svg width="17" height="15" viewBox="0 0 17 15"><rect width="17" height="15" fill="#fff"/><path d="M0 0 H17 L0 15 Z" fill="#FFFF00"/><g fill="#000"><circle cx="6" cy="2" r="0.5"/><circle cx="10" cy="2" r="0.5"/><circle cx="3" cy="6" r="0.5"/><circle cx="7" cy="6" r="0.5"/><circle cx="2" cy="10" r="0.5"/></g><line x1="0" y1="15" x2="17" y2="0" stroke="#0050FF" stroke-width="0.9"/><line x1="2.5" y1="2.2" x2="14" y2="13" stroke="#000" stroke-width="3.4" stroke-linecap="round"/><g fill="#fff"><circle cx="4" cy="3.6" r="0.5"/><circle cx="6" cy="5.5" r="0.5"/><circle cx="8" cy="7.4" r="0.5"/></g></svg></div>
<div class="a mt" style="top:171px;color:#000">Median...</div>
<div class="a mt" style="top:193px;color:#6D6D6D">Smart Blur...</div>
<div class="a mt" style="top:215px;color:#6D6D6D">Gaussian Filter...</div>
<div class="a mt" style="top:237px;color:#000">Erode/Dilate...</div>
<div class="a mt" style="top:259px;color:#6D6D6D">Brightness/Contrast...</div>
<div class="a mt" style="top:281px;color:#000">Invert</div>
<div class="a" style="left:4px;top:284px;line-height:0"><svg width="16" height="16" viewBox="-8 -8 16 16"><circle r="7.2" fill="#fff" stroke="#000" stroke-width="0.8"/><path d="M0 -7.2 A 7.2 7.2 0 0 0 0 7.2 A 3.6 3.6 0 0 0 0 0 A 3.6 3.6 0 0 1 0 -7.2 Z" fill="#000" transform="rotate(-30)"/><circle cx="0" cy="-4.3" r="1" fill="#000"/><circle cx="0.2" cy="4" r="1.1" fill="#fff"/></svg></div>
<div class="a" style="left:35px;top:307px;width:180px;height:1px;background:#D7D7D7;box-shadow:0 1px 0 #fff"></div>
<div class="a mt" style="top:311px;color:#000">Image Size...</div>
<div class="a" style="left:35px;top:337px;width:180px;height:1px;background:#D7D7D7;box-shadow:0 1px 0 #fff"></div>
<div class="a mt" style="top:341px;color:#000">Rotate...</div>
<div class="a mt" style="top:363px;color:#000">Rotate by 2 points</div>
<div class="a mt" style="top:385px;color:#000">Rotate 90 CW</div>
<div class="a" style="left:3px;top:388px;line-height:0"><svg width="18" height="15" viewBox="0 0 18 15"><path d="M6 3.5 A 5 5 0 1 0 10 5.5" fill="none" stroke="#000080" stroke-width="1.2"/><path d="M3.5 1.5 L8 1.2 L6.5 5.5 Z" fill="#000080"/><text x="10" y="5.5" font-size="6.5" fill="#000080" font-family="Liberation Sans">90</text></svg></div>
<div class="a mt" style="top:407px;color:#000">Rotate 90 CCW</div>
<div class="a" style="left:3px;top:410px;line-height:0"><svg width="18" height="15" viewBox="0 0 18 15"><path d="M10.5 3.5 A 5 5 0 1 1 6.5 5.5" fill="none" stroke="#000080" stroke-width="1.2"/><path d="M13 1.5 L8.5 1.2 L10 5.5 Z" fill="#000080"/><text x="0" y="5.5" font-size="6.5" fill="#000080" font-family="Liberation Sans">90</text></svg></div>
<div class="a mt" style="top:429px;color:#000">Mirror Horizontally</div>
<div class="a" style="left:4px;top:432px;line-height:0"><svg width="17" height="15" viewBox="0 0 17 15"><path d="M7 1 L7 13.5 L1.5 13.5 Z M10 1 L10 13.5 L15.5 13.5 Z" fill="#FFFF00" stroke="#0000C0" stroke-width="0.9"/><line x1="8.5" y1="0" x2="8.5" y2="15" stroke="#000" stroke-width="0.7" stroke-dasharray="1 0.8"/></svg></div>
<div class="a mt" style="top:451px;color:#000">Mirror Vertically</div>
<div class="a" style="left:4px;top:454px;line-height:0"><svg width="17" height="16" viewBox="0 0 17 16"><path d="M1.5 1 L15.5 6.5 L1.5 6.5 Z M1.5 9.5 L15.5 9.5 L1.5 15 Z" fill="#FFFF00" stroke="#0000C0" stroke-width="0.9"/><line x1="0" y1="8" x2="17" y2="8" stroke="#000" stroke-width="0.7" stroke-dasharray="1 0.8"/></svg></div>
<div class="a" style="left:35px;top:477px;width:180px;height:1px;background:#D7D7D7;box-shadow:0 1px 0 #fff"></div>
<div class="a mt" style="top:481px;color:#000">Image Info..</div>
<div class="a mt" style="top:481px;left:175px;color:#000;letter-spacing:0.3px">Ctrl+I</div>
</div>

<div class="a" style="left:0;top:0;width:1024px;height:1px;background:#4F9ECC"></div>
<div class="a" style="left:0;top:0;width:1px;height:833px;background:#4F9ECC"></div>
<div class="a" style="left:1023px;top:0;width:1px;height:833px;background:#4F9ECC"></div>
<div class="a" style="left:0;top:832px;width:1024px;height:1px;background:#4F9ECC"></div>
<svg class="a" style="left:9px;top:5px" width="18" height="20" viewBox="0 0 18 20">
 <defs><linearGradient id="tv" x1="0" y1="0" x2="1" y2="1"><stop offset="0" stop-color="#4A8AE8"/><stop offset="1" stop-color="#0D3A9A"/></linearGradient>
 <linearGradient id="ta" x1="0" y1="1" x2="1" y2="0"><stop offset="0" stop-color="#D82000"/><stop offset="1" stop-color="#FF5A30"/></linearGradient></defs>
 <path d="M3.8 8.5 L7.5 18 L10.5 18 L16.5 2 L12.5 2 L9 12 L7.5 8.5 Z" fill="url(#tv)" stroke="#0A1A50" stroke-width="0.9" stroke-linejoin="round"/>
 <path d="M1.8 8.8 L8 5.3 L6.5 2.5 L13 2 L10.5 7.8 L9.5 6.8 L3.2 11 Z" fill="url(#ta)" stroke="#401000" stroke-width="0.7" stroke-linejoin="round"/>
</svg>
<div class="a" style="left:928px;top:13px;width:8px;height:2px;background:#1A1A1A"></div>
<div class="a" style="left:954px;top:7px;width:11px;height:9px;border:1px solid #1A1A1A;border-top-width:2px"></div>
<div class="a" style="left:972px;top:1px;width:45px;height:20px;background:#C75050"></div>
<svg class="a" style="left:990px;top:7px" width="10" height="10" viewBox="0 0 10 10"><path d="M1 1 L9 8.5 M9 1 L1 8.5" stroke="#fff" stroke-width="1.6"/></svg>
<svg class="a" style="left:250px;top:193px" width="14" height="21" viewBox="0 0 14 21">
 <path d="M0.5 0.5 V16.5 L4 13.2 L7 19 L9.2 18 L6.5 12.2 H11.5 Z" fill="#fff" stroke="#000" stroke-width="1" stroke-linejoin="miter"/>
</svg>
</body></html>
